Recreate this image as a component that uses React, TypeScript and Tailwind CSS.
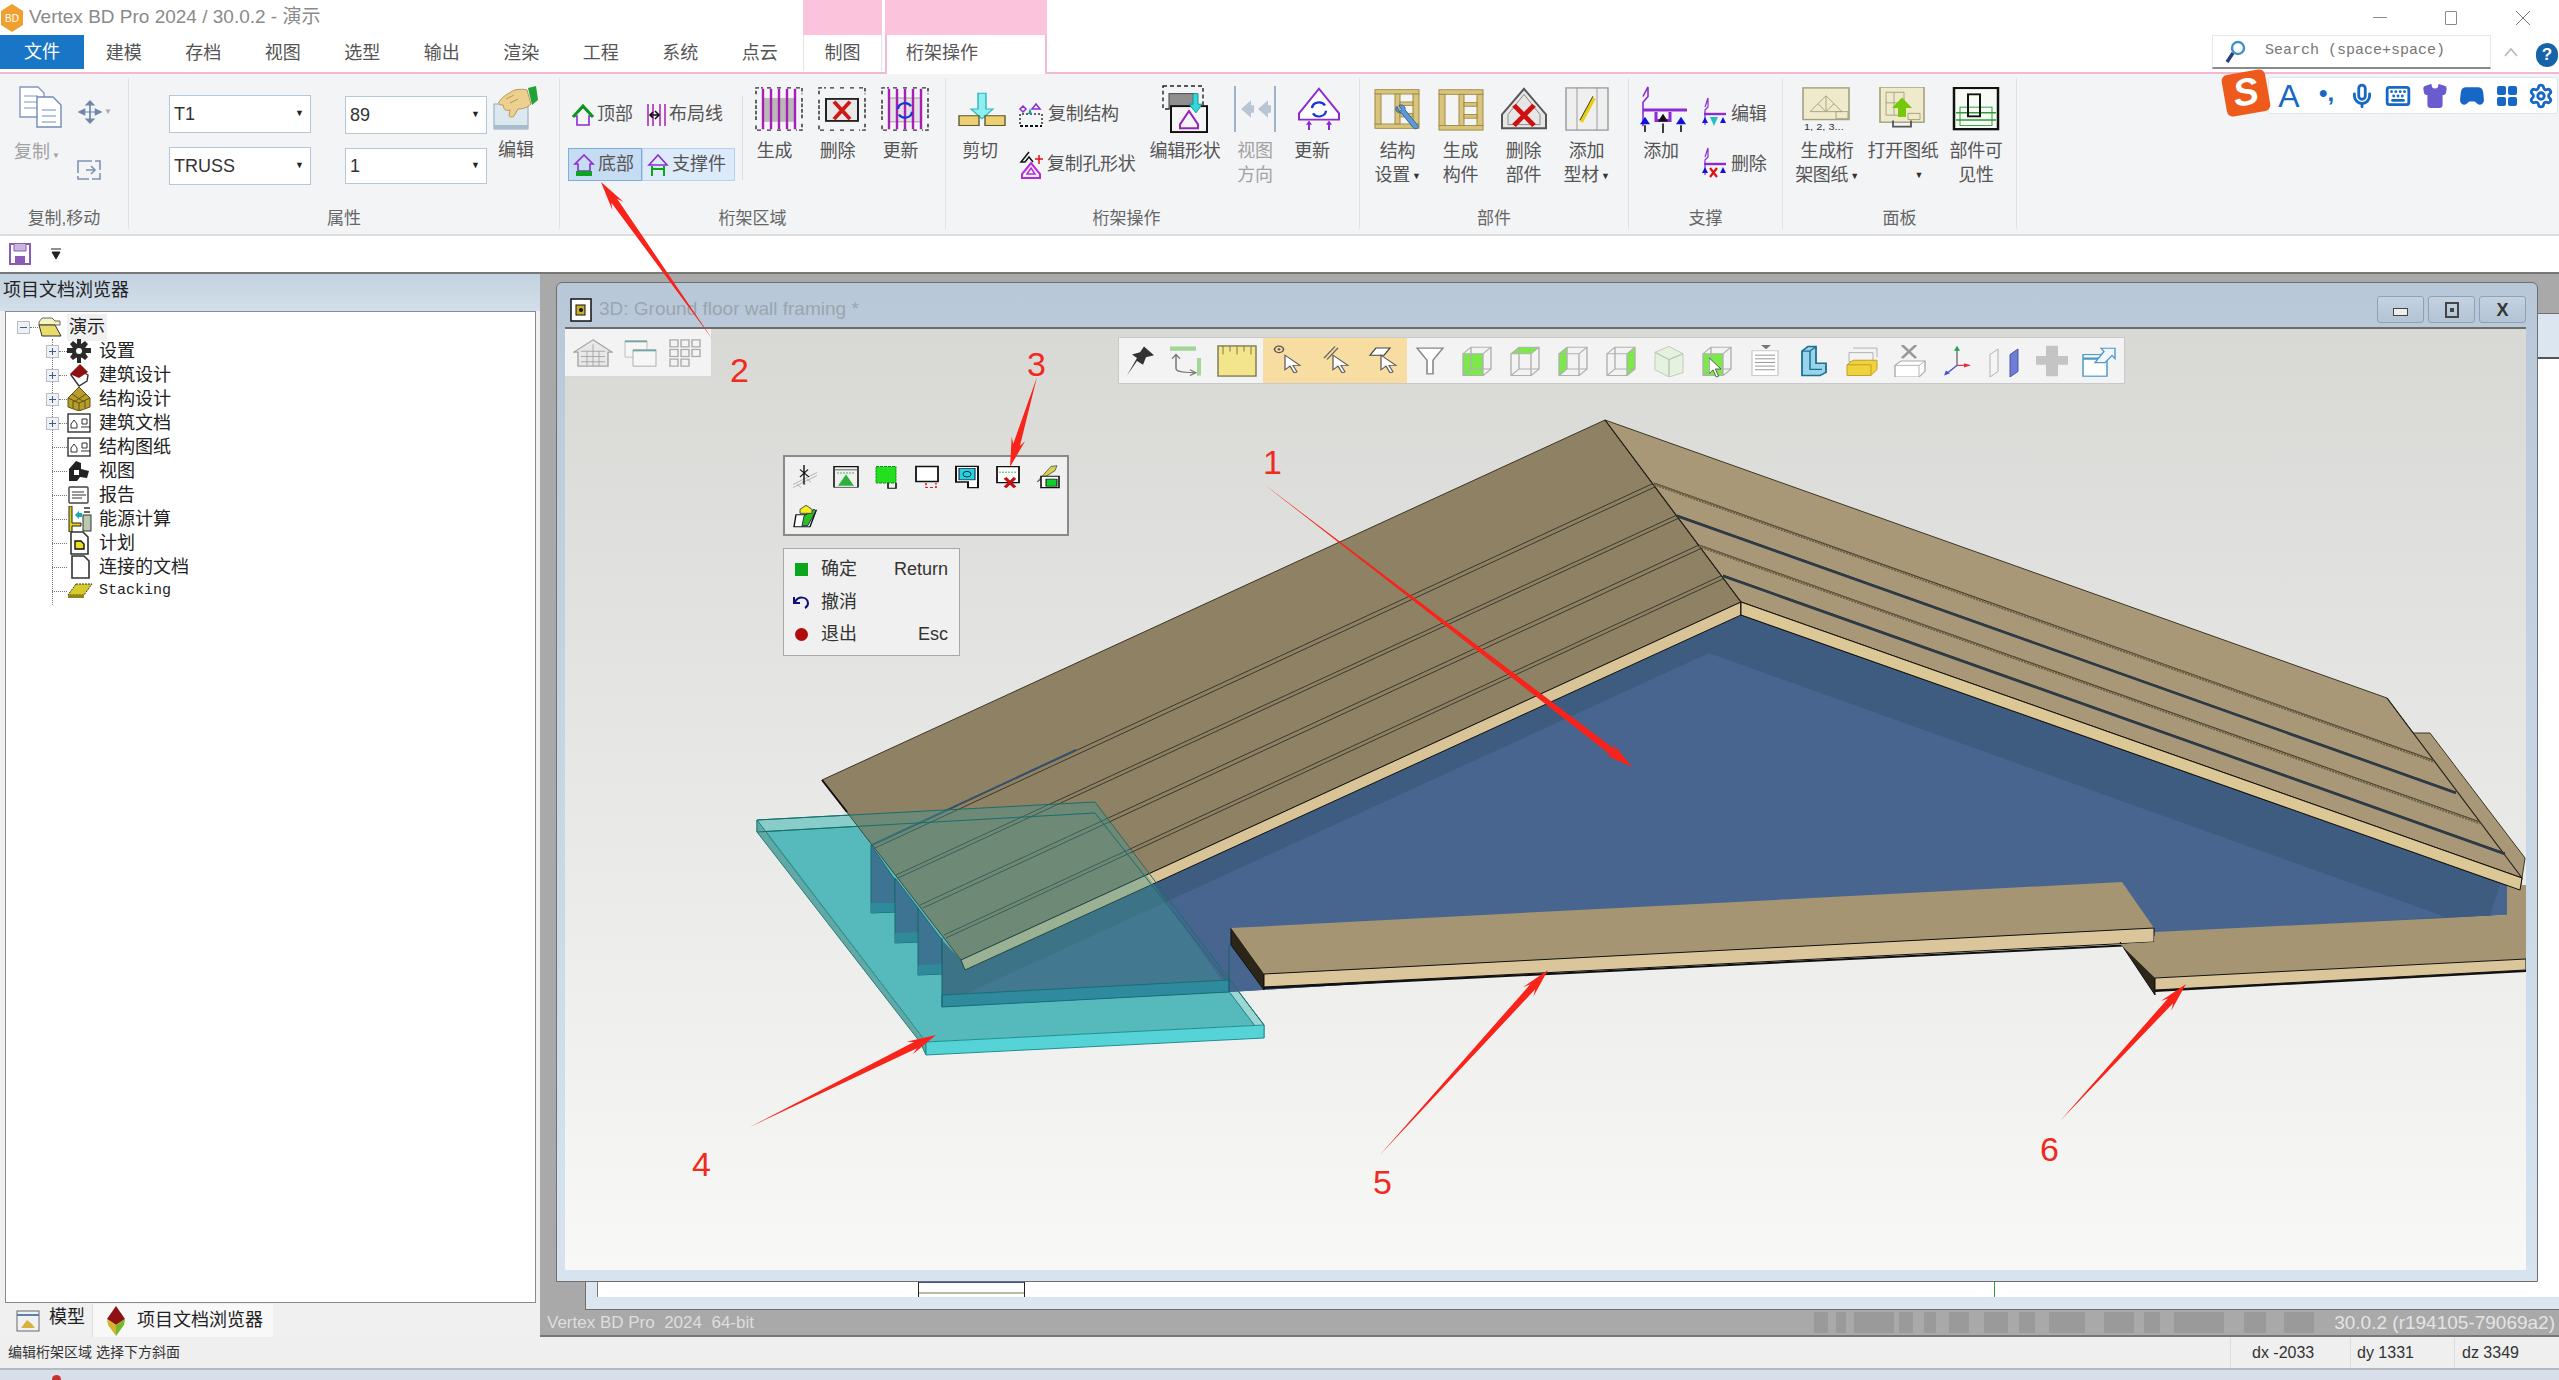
import React from "react";
import { Gamepad2, Keyboard, LayoutGrid, Mic, Settings, Shirt } from "lucide-react";

const CJK = "font-['Liberation_Sans','Noto_Sans_CJK_SC',sans-serif]";

// ---------- ribbon icons (48 box) ----------
const I = ({ children, w = 48, h = 48, className }: { children: React.ReactNode; w?: number; h?: number; className?: string }) => (
  <svg width={w} height={h} viewBox={`0 0 ${w} ${h}`} preserveAspectRatio="none" fill="none" className={className}>
    {children}
  </svg>
);

const TrussBox = ({ children }: { children?: React.ReactNode }) => (
  <I>
    <path d="M1 8V1h7M12 1h6M22 1h6M32 1h6M41 1h6v7M47 12v24M47 40v7h-6M36 47h-6M26 47h-6M16 47h-6M6 47H1v-7M1 36V12" stroke="#333" strokeWidth="1.5" strokeDasharray="4 2" />
    {children}
  </I>
);
const Purple = () => (
  <g stroke="#a81fb3" strokeWidth="2.4">
    <path d="M8 2v44M16 2v44M24 2v44M32 2v44M40 2v44" />
  </g>
);
const Frame = () => (
  <g stroke="#a08a45" fill="#d8c47c" strokeWidth="1">
    <rect x="2" y="3" width="44" height="5" />
    <rect x="2" y="42" width="44" height="5" />
    <rect x="2" y="8" width="6" height="34" />
    <rect x="40" y="8" width="6" height="34" />
    <rect x="22" y="8" width="5" height="34" />
    <rect x="27" y="17" width="13" height="4" />
    <rect x="27" y="30" width="13" height="4" />
  </g>
);

const icons: Record<string, React.ReactNode> = {
  gen: <TrussBox><rect x="8" y="12" width="32" height="26" fill="#b9b9b9" /><Purple /></TrussBox>,
  del: (
    <TrussBox>
      <rect x="8" y="13" width="32" height="24" fill="#e8e8e8" stroke="#222" strokeWidth="2" />
      <path d="M16 16l16 19M32 16L16 35" stroke="#d01818" strokeWidth="4" />
    </TrussBox>
  ),
  upd: (
    <TrussBox>
      <rect x="8" y="12" width="32" height="26" fill="#e2e2e2" stroke="#999" />
      <Purple />
      <path d="M17 24a7 7 0 0 1 13-3M31 27a7 7 0 0 1-13 3" stroke="#1438d8" strokeWidth="2.4" />
    </TrussBox>
  ),
  cut: (
    <I>
      <path d="M20 3h8v21h7L24 37 13 24h7z" fill="#8deeee" stroke="#2bb5c0" strokeWidth="1.4" />
      <rect x="1" y="33" width="20" height="13" fill="#eecf72" stroke="#5b5b35" strokeWidth="1.4" />
      <rect x="27" y="33" width="20" height="13" fill="#eecf72" stroke="#5b5b35" strokeWidth="1.4" />
    </I>
  ),
  editShape: (
    <I w={48} h={50}>
      <path d="M2 1h40v24H2z" stroke="#222" strokeWidth="1.4" strokeDasharray="4 3" />
      <rect x="8" y="9" width="26" height="16" fill="#8f8f8f" stroke="#444" />
      <rect x="10" y="22" width="36" height="27" fill="#f5f5f5" stroke="#111" strokeWidth="2" />
      <path d="M28 27l9 14v4H19v-4z" stroke="#9a22bb" strokeWidth="2" />
      <path d="M32 9h5v11h4l-6 9-7-9h4z" fill="#33d8d8" stroke="#1a8f9a" />
    </I>
  ),
  view: (
    <I w={48} h={50}>
      <path d="M4 1v48M44 1v48" stroke="#9eb2cb" strokeWidth="2" />
      <path d="M10 25l10-9v5h3v8h-3v5zM27 25l10-9v5h3v8h-3v5z" fill="#b9c5d4" />
    </I>
  ),
  update: (
    <I w={48} h={50}>
      <path d="M24 2L44 30v7H4v-7z" stroke="#8d2bd2" strokeWidth="2" fill="#fff" />
      <path d="M17 24a7 7 0 0 1 13-3M31 27a7 7 0 0 1-13 3" stroke="#1438d8" strokeWidth="2.4" />
      <path d="M14 40v9M34 40v9" stroke="#8d2bd2" strokeWidth="2" />
      <path d="M14 38l-3 5h6zM34 38l-3 5h6z" fill="#8d2bd2" />
    </I>
  ),
  struct: (
    <I w={50} h={50}>
      <Frame />
      <path d="M24 22c-3 4 0 8 4 7l12 17c2 3 6 1 5-2L32 26c1-4-3-7-6-5l3 5-3 2z" fill="#5f9ad8" stroke="#2a5f9a" />
    </I>
  ),
  genPart: <I><Frame /></I>,
  delPart: (
    <I>
      <path d="M24 2L46 30v15H2V30z" fill="#e6e6e6" stroke="#555" strokeWidth="2" />
      <path d="M24 8L40 30v11H8V30z" stroke="#888" />
      <path d="M14 20l20 22M34 20L14 42" stroke="#d01010" strokeWidth="5" />
    </I>
  ),
  profile: (
    <I>
      <rect x="3" y="1" width="42" height="46" fill="#efefef" stroke="#999" strokeWidth="1.4" />
      <path d="M14 1v46M34 1v46" stroke="#999" />
      <path d="M18 38L31 12" stroke="#e8d010" strokeWidth="4" />
      <path d="M17 36l13-26" stroke="#333" strokeWidth="1" />
    </I>
  ),
  add: (
    <I w={50} h={50}>
      <path d="M5 12L10 2v10L5 18v25" stroke="#8d2bd2" strokeWidth="1.6" />
      <path d="M5 26h44M18 28v9h14v-9" stroke="#8d2bd2" strokeWidth="3" />
      <path d="M7 42v7M25 40v10M43 42v7" stroke="#111" strokeWidth="1.6" />
      <path d="M7 33l-5 8h10zM43 33l-5 8h10z" fill="#1010e0" />
      <path d="M25 30l-5 8h10z" fill="#111" />
    </I>
  ),
  genDraw: (
    <I w={50} h={50}>
      <rect x="1" y="1" width="46" height="36" fill="#eeeacb" stroke="#a3a27c" strokeWidth="1.6" />
      <path d="M8 28L24 10l16 18zM24 10v18M16 19l8 9 8-9" stroke="#a3a27c" />
      <rect x="34" y="28" width="12" height="8" stroke="#a3a27c" />
      <text x="2" y="49" fontSize="11" fill="#333" fontFamily="Liberation Sans">1, 2, 3...</text>
    </I>
  ),
  openDraw: (
    <I w={50} h={50}>
      <rect x="2" y="0" width="44" height="40" fill="#eeeacb" stroke="#a3a27c" strokeWidth="1.6" />
      <path d="M8 6h18v26H8zM8 18h18M16 6v26M30 30h12v7H30z" stroke="#a3a27c" />
      <path d="M20 20h8v14h-8z" fill="#76c80a" />
      <path d="M24 12l-10 12h20z" fill="#76c80a" />
      <path d="M15 38v7h18v-7" stroke="#555" strokeWidth="1.8" />
    </I>
  ),
  vis: (
    <I>
      <rect x="2" y="1" width="44" height="45" fill="#f6fbf4" stroke="#111" strokeWidth="2.5" />
      <path d="M4 28h40M4 36h40" stroke="#2e9a3c" strokeWidth="1.6" />
      <rect x="8" y="22" width="32" height="20" stroke="#2e9a3c" />
      <rect x="16" y="8" width="12" height="24" stroke="#111" strokeWidth="2" />
    </I>
  ),
};

const HouseTop = () => (
  <I w={24} h={22}>
    <path d="M12 3L3 12h3v9h12v-9h3z" stroke="#8d2bd2" strokeWidth="1.6" />
    <path d="M2 13L12 2l10 11" stroke="#0a9a1a" strokeWidth="3" />
  </I>
);
const HouseBottom = () => (
  <I w={24} h={22}>
    <path d="M12 1L3 10h3v7h12v-7h3z" stroke="#8d2bd2" strokeWidth="1.6" />
    <rect x="4" y="17" width="16" height="5" fill="#0ca61e" />
  </I>
);
const HouseSupport = () => (
  <I w={24} h={22}>
    <path d="M12 1L3 11h18z" stroke="#8d2bd2" strokeWidth="1.6" />
    <path d="M6 12v10M18 12v10M5 15h14" stroke="#0ca61e" strokeWidth="2" />
  </I>
);
const LayoutLines = () => (
  <I w={22} h={24}>
    <path d="M3 1v22M8 1v22M15 1v22M20 1v22" stroke="#a81fb3" strokeWidth="1.5" />
    <path d="M5 12h9M10 8l4 4-4 4M8 9l-3 3 3 3" stroke="#111" strokeWidth="1.6" />
  </I>
);
const CopyStruct = () => (
  <I w={26} h={26}>
    <path d="M2 22V12h22v10" stroke="#333" strokeWidth="1.5" strokeDasharray="2 2" />
    <path d="M5 4l3 3-3 3-3-3zM18 2l4 5h-8z" stroke="#8d2bd2" strokeWidth="1.5" />
    <path d="M12 6l-2 6h4z" fill="#1a9ab0" />
    <path d="M2 24h22" stroke="#111" strokeWidth="2" strokeDasharray="3 2" />
  </I>
);
const CopyHole = () => (
  <I w={24} h={28}>
    <path d="M10 1L2 11h4l4-5 4 5" stroke="#111" strokeWidth="1.5" />
    <path d="M12 12l9 11v4H3v-4z" stroke="#b82ad6" strokeWidth="2" />
    <path d="M12 17l4 6H8z" stroke="#b82ad6" strokeWidth="1.5" />
    <path d="M20 4v9M16 8h8" stroke="#e01010" strokeWidth="1.5" />
  </I>
);
const SupportEdit = () => (
  <I w={26} h={34}>
    <path d="M4 10L7 1v9L4 13v15" stroke="#8d2bd2" strokeWidth="1.2" />
    <path d="M3 17h22" stroke="#8d2bd2" strokeWidth="2.4" />
    <path d="M4 20l-3 6h6zM22 20l-3 6h6z" fill="#1010e0" />
    <path d="M9 20h8l-4 9z" fill="#1fc0c0" />
  </I>
);
const SupportDel = () => (
  <I w={26} h={34}>
    <path d="M4 10L7 1v9L4 13v15" stroke="#8d2bd2" strokeWidth="1.2" />
    <path d="M3 17h22" stroke="#8d2bd2" strokeWidth="2.4" />
    <path d="M4 20l-3 6h6zM22 20l-3 6h6z" fill="#1010e0" />
    <path d="M9 21l7 9M16 21l-7 9" stroke="#e01010" strokeWidth="2.2" />
  </I>
);

const Caret = () => <span className="text-[9px] leading-none ml-0.5 align-middle text-[#333]">▼</span>;

// ---------- ribbon layout ----------
const Group = ({ className, label, labelClass, children }: { className: string; label: string; labelClass?: string; children: React.ReactNode }) => (
  <div className={`flex flex-col border-r border-[#e0e2e5] shrink-0 ${className}`}>
    <div className="flex flex-1 min-h-0">{children}</div>
    <div className={`h-[22px] leading-[24px] text-center text-[17px] text-[#666] ${labelClass ?? ""}`}>{label}</div>
  </div>
);

const Big = ({ id, lines, className, gray, caret, iconClass, textClass }: { id: string; lines: string[]; className: string; gray?: boolean; caret?: boolean; iconClass?: string; textClass?: string }) => (
  <div className={`flex flex-col items-center pt-[6px] shrink-0 ${className}`}>
    <div className={`h-[50px] flex items-center justify-center ${iconClass ?? "[&_svg]:h-[44px]"}`}>{icons[id]}</div>
    <div className={`mt-[5px] text-[18px] leading-[24px] text-center whitespace-nowrap tracking-[-0.3px] ${gray ? "text-[#a2a2a2]" : "text-[#555]"} ${textClass ?? ""}`}>
      {lines.map((l, i) => (
        <div key={i}>
          {l}
          {caret && i === lines.length - 1 ? <Caret /> : null}
        </div>
      ))}
    </div>
  </div>
);

const Small = ({ icon, text, className }: { icon: React.ReactNode; text: string; className?: string }) => (
  <div className={`flex items-center gap-[4px] text-[18px] text-[#555] whitespace-nowrap tracking-[-0.3px] ${className ?? ""}`}>
    {icon}
    <span>{text}</span>
  </div>
);

const Combo = ({ value, className }: { value: string; className: string }) => (
  <div className={`flex items-center justify-between border border-[#b4c6da] bg-white pl-[4px] pr-[6px] text-[18px] text-[#333] ${className}`}>
    <span>{value}</span>
    <span className="text-[9px] text-[#222]">▼</span>
  </div>
);

const Ribbon = () => (
  <div className="h-[162px] bg-[#f3f4f6] border-b-2 border-[#dcdcdc] pt-[4px] pb-[5px] flex">
    <Group className="w-[129px]" label="复制,移动">
      <div className="w-full">
        <div className="flex pl-[18px] pt-[8px] gap-[12px] items-center">
          <svg width="48" height="42" viewBox="0 0 48 42" fill="none">
            <path d="M2 1h18l6 6v24H2z" fill="#fff" stroke="#8297c0" strokeWidth="1.4" />
            <path d="M6 10h14M6 16h14M6 22h14" stroke="#8297c0" />
            <path d="M19 11h16l8 8v22H19z" fill="#fff" stroke="#7189b8" strokeWidth="1.4" />
            <path d="M24 24h14M24 30h14M24 36h14" stroke="#7189b8" />
          </svg>
          <div className="flex items-center mt-[9px]">
            <svg width="24" height="26" viewBox="0 0 26 40" preserveAspectRatio="none" fill="none">
              <path d="M13 6v28M3 20h20M13 3l-4 6h8zM13 37l-4-6h8zM1 20l6-4v8zM25 20l-6-4v8z" fill="#6f86a8" stroke="#6f86a8" strokeWidth="1.8" />
            </svg>
            <span className="text-[8px] text-[#aaa] ml-[2px]">▼</span>
          </div>
        </div>
        <div className="flex items-center pl-[14px] mt-[11px] text-[18px] text-[#a2a2a2] gap-[28px]">
          <span>复制<span className="text-[8px] ml-[2px]">▼</span></span>
        </div>
        <div className="flex pl-[77px] mt-[-8px]">
          <svg width="24" height="24" viewBox="0 0 24 24" fill="none">
            <path d="M1 3h22v18H1z" stroke="#7f93b3" strokeWidth="1.6" strokeDasharray="14 3" />
            <path d="M9 12h9M14 8l4 4-4 4" stroke="#7f93b3" strokeWidth="1.6" />
          </svg>
        </div>
      </div>
    </Group>

    <Group className="w-[431px]" label="属性">
      <div className="flex pl-[40px] pt-[17px]">
        <div className="flex flex-col gap-[14px]">
          <Combo value="T1" className="w-[142px] h-[38px]" />
          <Combo value="TRUSS" className="w-[142px] h-[38px]" />
        </div>
        <div className="flex flex-col gap-[14px] ml-[34px] pt-[1px]">
          <Combo value="89" className="w-[142px] h-[38px]" />
          <Combo value="1" className="w-[142px] h-[36px]" />
        </div>
        <div className="flex flex-col items-center ml-[6px] -mt-[9px] w-[46px]">
          <svg width="46" height="44" viewBox="0 0 46 44" fill="none">
            <rect x="1" y="18" width="34" height="25" fill="#dce8f0" stroke="#8ea4b8" />
            <rect x="1" y="39" width="34" height="4" fill="#a9bccb" />
            <path d="M6 16c2-4 9-9 16-12 4-1 9-1 12 0l4 14c-4 4-9 5-13 5l-4 7c-2 2-5 1-5-1l1-5c-3 1-6 0-6-2l-1-3c-3 0-5-1-4-3z" fill="#ecd08f" stroke="#bd9650" />
            <path d="M35 2l8-2 2 14-6 5z" fill="#1fa336" />
            <path d="M13 13l8-4M17 17l8-4" stroke="#bd9650" />
          </svg>
          <span className="mt-[8px] text-[18px] text-[#555] leading-[24px]">编辑</span>
        </div>
      </div>
    </Group>

    <Group className="w-[386px]" label="桁架区域">
      <div className="pl-[8px] pt-[20px] w-[182px] shrink-0">
        <div className="grid grid-cols-[74px_93px] grid-rows-[33px_33px] gap-y-[17px] text-[18px] text-[#555]">
          <div className="flex items-center gap-[2px] pl-[3px]"><HouseTop /><span>顶部</span></div>
          <div className="flex items-center gap-[2px] pl-[3px]"><LayoutLines /><span>布局线</span></div>
          <div className="flex items-center gap-[2px] pl-[3px] bg-[#c5dcf3] border border-[#7eaedd]"><HouseBottom /><span>底部</span></div>
          <div className="flex items-center gap-[2px] pl-[3px] bg-[#dceafa] border border-[#b5d1ee]"><HouseSupport /><span>支撑件</span></div>
        </div>
      </div>
      <div className="w-px h-[84px] mt-[18px] bg-[#dcdee1] shrink-0" />
      <div className="flex pl-[4px]">
        <Big id="gen" lines={["生成"]} className="w-[63px]" textClass="pr-[8px]" />
        <Big id="del" lines={["删除"]} className="w-[63px]" textClass="pr-[8px]" />
        <Big id="upd" lines={["更新"]} className="w-[63px]" textClass="pr-[8px]" />
      </div>
    </Group>

    <Group className="w-[414px]" label="桁架操作" labelClass="pr-[52px]">
      <Big id="cut" lines={["剪切"]} className="w-[72px]" iconClass="[&_svg]:h-[36px]" textClass="pr-[4px]" />
      <div className="w-[131px] shrink-0 pt-[20px] flex flex-col gap-[17px]">
        <Small icon={<CopyStruct />} text="复制结构" className="h-[33px]" />
        <Small icon={<CopyHole />} text="复制孔形状" className="h-[33px] pl-[1px]" />
      </div>
      <Big id="editShape" lines={["编辑形状"]} className="w-[72px]" iconClass="[&_svg]:h-[48px]" />
      <Big id="view" lines={["视图", "方向"]} className="w-[68px]" gray iconClass="[&_svg]:h-[48px]" />
      <Big id="update" lines={["更新"]} className="w-[60px]" textClass="pr-[14px]" />
    </Group>

    <Group className="w-[269px]" label="部件">
      <div className="flex pl-[6px]">
        <Big id="struct" lines={["结构", "设置"]} caret className="w-[63px]" />
        <Big id="genPart" lines={["生成", "构件"]} className="w-[63px]" />
        <Big id="delPart" lines={["删除", "部件"]} className="w-[63px]" />
        <Big id="profile" lines={["添加", "型材"]} caret className="w-[63px]" />
      </div>
    </Group>

    <Group className="w-[154px]" label="支撑">
      <Big id="add" lines={["添加"]} className="w-[68px]" iconClass="[&_svg]:h-[48px]" textClass="pr-[4px]" />
      <div className="pt-[18px] flex flex-col gap-[14px] pl-[4px]">
        <Small icon={<SupportEdit />} text="编辑" className="h-[36px]" />
        <Small icon={<SupportDel />} text="删除" className="h-[36px]" />
      </div>
    </Group>

    <Group className="w-[234px]" label="面板">
      <div className="flex pl-[6px]">
        <Big id="genDraw" lines={["生成桁", "架图纸"]} caret className="w-[76px]" />
        <div className="w-[76px] shrink-0 flex flex-col items-center">
          <Big id="openDraw" lines={["打开图纸"]} className="w-[76px]" />
          <span className="text-[9px] text-[#333] mt-[6px] ml-[32px]">▼</span>
        </div>
        <Big id="vis" lines={["部件可", "见性"]} className="w-[70px]" />
      </div>
    </Group>
  </div>
);

// ---------- tree ----------
const TreeIcon = ({ kind }: { kind: string }) => {
  if (kind === "gear")
    return (
      <I w={24} h={24}>
        <path d="M10 0h4v5l4-3 3 3-3 4h6v5h-6l3 4-3 3-4-3v6h-4v-6l-4 3-3-3 3-4H0V9h6L3 5l3-3 4 3z" fill="#2a2a2a" />
        <circle cx="12" cy="12" r="7" fill="#2a2a2a" />
        <circle cx="12" cy="12" r="3" fill="#fff" />
      </I>
    );
  if (kind === "arch")
    return (
      <I w={24} h={24}>
        <path d="M4 12l8 11 8-5 1-6-9-5z" fill="#fff" stroke="#333" strokeWidth="1.4" />
        <path d="M3 11L13 1l8 8-9 6z" fill="#8f1010" />
      </I>
    );
  if (kind === "struct")
    return (
      <I w={24} h={24}>
        <path d="M12 0L23 11v9l-11 4L1 20v-9z" fill="#b69c2a" stroke="#5f5412" />
        <path d="M1 11l11 5 11-5M12 16v8M6 14v7M18 14v7M5 7l12 8M19 7L7 15" stroke="#5f5412" />
      </I>
    );
  if (kind === "adoc" || kind === "sdoc")
    return (
      <I w={24} h={20}>
        <rect x="1" y="1" width="22" height="18" fill="#fff" stroke="#333" strokeWidth="1.4" />
        <path d="M4 11l3-4 3 4v4H4zM15 6h5v5h-5z" stroke="#333" />
        <path d="M14 14h9" stroke="#333" />
      </I>
    );
  if (kind === "view")
    return (
      <I w={24} h={24}>
        <path d="M2 10l7-8 5 2v6l8 2-2 7-7-1-3 4H2z" fill="#222" />
        <path d="M7 11h5v5H7z" fill="#fff" />
      </I>
    );
  if (kind === "report")
    return (
      <I w={24} h={20}>
        <rect x="2" y="2" width="19" height="16" rx="1" fill="#fff" stroke="#444" strokeWidth="1.4" />
        <path d="M5 7h12M5 10h14M5 13h10" stroke="#333" />
      </I>
    );
  if (kind === "energy")
    return (
      <I w={26} h={26}>
        <path d="M2 0h3v17h9v3H5v6H2z" fill="#e0d015" stroke="#222" />
        <path d="M8 9l4-4v2h3v4h-3v2z" fill="#1fa5b8" />
        <rect x="16" y="9" width="8" height="16" fill="#b9c8ae" stroke="#333" />
        <path d="M17 2h6M17 6h6" stroke="#333" strokeWidth="1.5" />
      </I>
    );
  if (kind === "plan")
    return (
      <I w={24} h={24}>
        <path d="M4 1h12l5 5v17H4z" fill="#fff" stroke="#333" strokeWidth="1.6" />
        <path d="M8 10h6l3 3v5H8z" fill="#e9dc22" stroke="#111" strokeWidth="1.4" />
      </I>
    );
  if (kind === "link")
    return (
      <I w={24} h={24}>
        <path d="M5 1h12l5 5v17H5z" fill="#fff" stroke="#333" strokeWidth="1.6" />
      </I>
    );
  return (
    <I w={26} h={16}>
      <path d="M9 1h16l-8 11H1z" fill="#d6cb2a" stroke="#333" strokeDasharray="2 1" />
      <path d="M1 12h16v3H1z" fill="#8e8615" />
    </I>
  );
};

const tree = [
  { kind: "gear", text: "设置", plus: true },
  { kind: "arch", text: "建筑设计", plus: true },
  { kind: "struct", text: "结构设计", plus: true },
  { kind: "adoc", text: "建筑文档", plus: true },
  { kind: "sdoc", text: "结构图纸" },
  { kind: "view", text: "视图" },
  { kind: "report", text: "报告" },
  { kind: "energy", text: "能源计算" },
  { kind: "plan", text: "计划" },
  { kind: "link", text: "连接的文档" },
];

const Box = ({ sign }: { sign: "+" | "-" }) => (
  <span className="w-[13px] h-[13px] shrink-0 border border-[#b8bcc4] bg-[#eef0f4] flex items-center justify-center relative">
    <span className="w-[7px] h-px bg-[#3e5a98]" />
    {sign === "+" && <span className="absolute w-px h-[7px] bg-[#3e5a98]" />}
  </span>
);

const LeftPanel = () => (
  <div className="w-[540px] shrink-0 flex flex-col bg-[#f0f0f0]">
    <div className="h-[37px] bg-linear-to-b from-[#c3d2e0] to-[#d2dfea] text-[18px] text-[#222] leading-[32px] pl-[3px]">项目文档浏览器</div>
    <div className="flex-1 mx-[5px] mr-[4px] border border-[#8a8a8a] bg-white relative pt-[3px] text-[18px] text-[#222]">
      <div className="absolute left-[46px] top-[27px] h-[266px] border-l border-dotted border-[#777]" />
      <div className="flex items-center h-[24px] pl-[11px]">
        <Box sign="-" />
        <span className="w-[8px] border-t border-dotted border-[#777]" />
        <svg width="24" height="20" viewBox="0 0 24 20" fill="none">
          <path d="M1 5l3-4h10l3 3h5v4H1z" fill="#f8f3c0" stroke="#666" />
          <path d="M1 8h16l6 11H4z" fill="#e8dc6a" stroke="#333" />
        </svg>
        <span className="ml-[5px] bg-[#f0f0f0] px-[2px]">演示</span>
      </div>
      {tree.map((t) => (
        <div key={t.text} className="flex items-center h-[24px] pl-[40px]">
          {t.plus ? <Box sign="+" /> : <span className="w-[6px] shrink-0" />}
          <span className={`${t.plus ? "w-[8px]" : "w-[15px]"} shrink-0 border-t border-dotted border-[#777]`} />
          <span className="w-[32px] shrink-0 flex items-center"><TreeIcon kind={t.kind} /></span>
          <span>{t.text}</span>
        </div>
      ))}
      <div className="flex items-center h-[24px] pl-[46px]">
        <span className="w-[15px] shrink-0 border-t border-dotted border-[#777]" />
        <span className="w-[32px] shrink-0 flex items-center"><TreeIcon kind="stack" /></span>
        <span className="font-['Liberation_Mono',monospace] text-[15px]">Stacking</span>
      </div>
    </div>
    <div className="h-[33px] flex pl-[8px] text-[18px] text-[#222] mt-[1px]">
      <div className="w-[85px] flex items-center pl-[8px] gap-[9px] border-r border-[#dedede]">
        <svg width="24" height="22" viewBox="0 0 24 22" fill="none">
          <rect x="1" y="1" width="22" height="20" fill="#eef2f7" stroke="#666" />
          <path d="M1 5h22" stroke="#5e7fa8" strokeWidth="2" />
          <path d="M5 18l6-8 5 4 3 4z" fill="#d9b23c" />
        </svg>
        <span className="-mt-[6px]">模型</span>
      </div>
      <div className="w-[180px] bg-[#f8f8f8] flex items-center pl-[12px] gap-[10px]">
        <svg width="22" height="32" viewBox="0 0 22 32" fill="none">
          <path d="M11 1l9 13-9 6-9-6z" fill="#8e1212" />
          <path d="M2 14l9 6v11L3 20z" fill="#d2b52f" />
          <path d="M20 14l-9 6v11l8-11z" fill="#76b82a" />
        </svg>
        <span>项目文档浏览器</span>
      </div>
    </div>
  </div>
);

// ---------- 3d scene ----------
const roofLeft = "1605,420 1741,602 961,960 822,780";
const fasciaLeft = "1741,602 961,960 965,970 1741,615";
const floorDark = "1741,615 2520,890 2507,890 2507,915 1229,992 942,1007 942,940 961,960";

const Scene = () => (
  <svg className="absolute inset-0" width="1961" height="941" viewBox="565 329 1961 941" fill="none">
    <defs>
      <clipPath id="over">
        <polygon points={roofLeft} />
        <polygon points={fasciaLeft} />
        <polygon points={floorDark} />
      </clipPath>
    </defs>
    {/* teal slab */}
    <polygon points="757,832 1095,813 1264,1025 926,1042" fill="#56b9bb" />
    <polygon points="757,820 1095,802 1095,813 757,832" fill="#88cdca" stroke="#1f7f7c" />
    <polygon points="757,820 757,832 920,1042 926,1055 926,1042" fill="#62a9a5" stroke="#1f7f7c" />
    <polygon points="1095,802 1264,1025 1264,1038 1095,813" fill="#9ed6d4" stroke="#1f7f7c" />
    <polygon points="926,1042 1264,1025 1264,1038 926,1055" fill="#56d3d7" stroke="#1f8f90" />
    <path d="M770,838L926,1042" stroke="#3d9a98" />

    {/* stair walls */}
    <polygon points="871,845 895,880 895,912 871,913" fill="#3c7491" stroke="#176a70" />
    <polygon points="871,903 895,903 895,912 871,913" fill="#2f8a9c" />
    <polygon points="895,878 918,908 918,942 895,943" fill="#3c7491" stroke="#176a70" />
    <polygon points="895,933 918,932 918,942 895,943" fill="#2f8a9c" />
    <polygon points="918,908 942,940 942,974 918,975" fill="#3c7491" stroke="#176a70" />
    <polygon points="918,965 942,964 942,974 918,975" fill="#2f8a9c" />

    {/* floor */}
    <polygon points={floorDark} fill="#3d5c7f" />
    <polygon points="1709,653 2446,917 1229,992 965,994" fill="#47658f" />
    <polygon points="2490,915 2500,885 2507,880 2507,915" fill="#47658f" />

    {/* left roof */}
    <polygon points={roofLeft} fill="#8f8163" stroke="#3c3626" />
    <polygon points={fasciaLeft} fill="#d9c497" stroke="#111" />
    <g stroke="#3b3a2e" strokeWidth="1">
      <path d="M1654,483L872,845M1657,486L875,848" />
      <path d="M1677,515L896,875M1679,518L898,878" />
      <path d="M1699,545L920,905M1702,548L923,908" />
      <path d="M1723,575L944,935M1725,578L946,938" />
    </g>
    <path d="M1076,750L872,845" stroke="#35506b" strokeWidth="2" />
    <path d="M822,780L847,812" stroke="#111" strokeWidth="2" />

    {/* right roof */}
    <polygon points="1605,420 2387,698 2413,733 2430,733 2525,858 2522,878 1741,602" fill="#a99877" stroke="#3c3626" />
    <path d="M2387,698L2522,878M1605,420L1741,602" stroke="#26231a" strokeWidth="1.2" />
    <path d="M1654,483L2433,760M1677,515L2456,792M1699,545L2480,822M1723,575L2505,853" stroke="#2f2c22" strokeWidth="1" />
    <path d="M1654,484L2433,761M1699,546L2480,823" stroke="#6b6045" strokeWidth="3" strokeDasharray="2 1" />
    <path d="M1677,516L2456,793M1723,576L2505,854" stroke="#2d3a47" strokeWidth="2.5" />
    <polygon points="1741,602 2522,878 2520,890 1741,615" fill="#dcc797" stroke="#111" />

    {/* tint where the slab's box overlaps */}
    <polygon points="757,820 1095,802 1229,990 926,1042" fill="rgba(60,150,145,.4)" clipPath="url(#over)" />
    <path d="M757,820L1095,802M757,832L1095,813" stroke="#176f6e" />
    <path d="M1095,813L1229,983M1095,802L1264,1025" stroke="#176f6e" />
    <polygon points="942,995 1229,980 1229,992 942,1007" fill="#2e8a9c" stroke="#176f78" />
    <path d="M942,938V1007M1229,945V992" stroke="#156370" />

    {/* board 5 */}
    <polygon points="1231,928 1264,974 1264,990 1231,945" fill="#2b2618" stroke="#111" />
    <polygon points="1231,928 2122,882 2154,928 1264,974" fill="#a59573" />
    <polygon points="1264,974 2154,928 2154,942 1264,987" fill="#dac69a" stroke="#111" />
    <path d="M1264,988L2154,944" stroke="#111" strokeWidth="2" />

    {/* board 6 */}
    <polygon points="2120,942 2155,978 2155,995 2125,950" fill="#2b2618" stroke="#111" />
    <polygon points="2155,932 2507,915 2507,885 2526,885 2526,959 2155,978 2120,944 2154,942" fill="#a59573" />
    <polygon points="2155,978 2526,959 2526,970 2155,990" fill="#dac69a" stroke="#111" />
    <path d="M2155,991L2526,971" stroke="#111" strokeWidth="2" />
    <polygon points="2522,878 2520,890 1741,615 1741,602" fill="#dcc797" stroke="#111" />
  </svg>
);

// ---------- toolbars over the canvas ----------
const Cube = ({ face }: { face?: "front" | "top" | "left" | "right" | "all" }) => (
  <I w={32} h={44}>
    {face === "front" && <path d="M2 12h20v30H2z" fill="#7de84a" />}
    {face === "top" && <path d="M2 12l8-9h20l-8 9z" fill="#7de84a" />}
    {face === "left" && <path d="M2 12l8-9v30l-8 9z" fill="#7de84a" />}
    {face === "right" && <path d="M22 12l8-9v30l-8 9z" fill="#7de84a" />}
    {face === "all" && <path d="M2 10l14-8 14 10v26l-14 6-14-10z" fill="#e6f2e0" stroke="#b9c6b2" />}
    {face === "all" && <path d="M2 10l14 10 14-8M16 20v24" stroke="#b9c6b2" strokeWidth="1.4" />}
    {face !== "all" && <path d="M2 12h20v30H2zM2 12l8-9h20v30l-8 9M22 12l8-9M2 42l8-9h20M10 3v30" stroke="#aeb2ae" strokeWidth="1.4" />}
  </I>
);

const Pointer = () => (
  <path d="M0 0l0 20 5-5 4 9 3-1-4-9h7z" fill="#fff" stroke="#555" strokeWidth="1.2" />
);

const tools: { x: string; node: React.ReactNode }[] = [
  { x: "w-[40px]", node: <I w={32} h={44}><path d="M20 2l10 12-8 3-3 10-6-5L3 42l10-24-5-5 8-3z" fill="#333" /></I> },
  { x: "w-[50px]", node: <I w={34} h={44}><rect x="2" y="2" width="26" height="6" fill="#a5d59a" /><rect x="29" y="18" width="4" height="24" fill="#a5d59a" /><path d="M8 14v18c0 4 4 6 18 6M4 19l4-6 4 6M22 34l6 4-6 4" stroke="#777" strokeWidth="1.5" /></I> },
  { x: "w-[53px]", node: <I w={40} h={34}><rect x="1" y="1" width="38" height="32" fill="#f2e58c" stroke="#7a7650" strokeWidth="1.4" /><path d="M6 1v9M13 1v6M20 1v9M27 1v6M34 1v9" stroke="#7a7650" /></I> },
];

const cursorTools = [
  <g key="a"><circle cx="7" cy="6" r="4.5" stroke="#555" strokeWidth="1.6" /><circle cx="7" cy="6" r="1.6" fill="#555" /></g>,
  <path key="b" d="M4 18L15 2M7 20L18 4" stroke="#666" strokeWidth="1.4" />,
  <path key="c" d="M2 14l6-10h14l-6 10z" fill="#fff" stroke="#444" strokeWidth="1.4" />,
];

const Toolbar = () => (
  <div className="absolute left-[553px] top-[8px] w-[1007px] h-[47px] bg-[#f3f3f3] border border-[#c9c9c9] flex items-center pl-[1px] [&_svg]:h-[32px]">
    {tools.map((t, i) => (
      <div key={i} className={`${t.x} shrink-0 flex justify-center`}>{t.node}</div>
    ))}
    <div className="flex h-full bg-[#f8dda2] shrink-0 w-[144px]">
      {cursorTools.map((c, i) => (
        <div key={i} className="w-[48px] flex justify-center items-center">
          <I w={30} h={44}>
            {c}
            <g transform="translate(13 14)"><Pointer /></g>
          </I>
        </div>
      ))}
    </div>
    <div className="w-[46px] shrink-0 flex justify-center">
      <I w={30} h={42}><path d="M2 4h26L18 20v18h-6V20z" fill="#fff" stroke="#888" strokeWidth="1.6" /></I>
    </div>
    <div className="w-[48px] shrink-0 flex justify-center"><Cube face="front" /></div>
    <div className="w-[48px] shrink-0 flex justify-center"><Cube face="top" /></div>
    <div className="w-[48px] shrink-0 flex justify-center"><Cube face="left" /></div>
    <div className="w-[48px] shrink-0 flex justify-center"><Cube face="right" /></div>
    <div className="w-[48px] shrink-0 flex justify-center"><Cube face="all" /></div>
    <div className="w-[48px] shrink-0 flex justify-center relative">
      <Cube face="front" />
      <span className="absolute left-[16px] top-[8px] [&_svg]:h-[22px]">
        <svg width="16" height="22" viewBox="0 0 20 28"><Pointer /></svg>
      </span>
    </div>
    <div className="w-[48px] shrink-0 flex justify-center">
      <I w={30} h={44}><path d="M11 0h10l-5 6z" fill="#777" /><rect x="2" y="8" width="26" height="34" fill="#fff" stroke="#bbb" /><path d="M5 14h20M5 19h20M5 24h20M5 29h20M5 34h20" stroke="#888" /></I>
    </div>
    <div className="w-[49px] shrink-0 flex justify-center">
      <I w={30} h={42}><path d="M3 8l6-6h8v22h10v12l-6 4H3z" fill="#9ad4ea" stroke="#1f6f92" strokeWidth="1.8" /><path d="M3 8h8v24h12M17 2l-6 6" stroke="#1f6f92" strokeWidth="1.5" /></I>
    </div>
    <div className="w-[48px] shrink-0 flex justify-center">
      <I w={34} h={42}><path d="M4 10h24v12H4z" stroke="#aaa" /><path d="M8 4h24v12" stroke="#aaa" /><path d="M2 26l6-6h24v12l-6 8H2z" fill="#f2d23c" stroke="#b59a20" /><path d="M2 26h24v14" stroke="#b59a20" /></I>
    </div>
    <div className="w-[48px] shrink-0 flex justify-center">
      <I w={34} h={44}><path d="M9 0l14 18M23 0L9 18" stroke="#999" strokeWidth="3" /><path d="M2 28l6-6h24v14l-6 8H2z" fill="#fff" stroke="#aaa" strokeWidth="1.4" /><path d="M2 28h24v16M26 28l6-6" stroke="#aaa" /></I>
    </div>
    <div className="w-[46px] shrink-0 flex justify-center">
      <I w={30} h={44}><path d="M15 28V4" stroke="#222" /><path d="M15 1l-3 7h6z" fill="#1ca44a" /><path d="M15 28h12" stroke="#e03040" strokeWidth="1.6" /><path d="M29 28l-7-3v6z" fill="#e03040" /><path d="M15 28L4 40" stroke="#3a55d8" strokeWidth="1.6" /><path d="M2 42l2-7 4 4z" fill="#3a55d8" /></I>
    </div>
    <div className="w-[48px] shrink-0 flex justify-center">
      <I w={32} h={40}><path d="M2 12l8-7v28l-8 7z" fill="#f5f5f5" stroke="#aaa" /><path d="M22 12l8-7v28l-8 7z" fill="#6f7ed6" stroke="#3d4a9a" /></I>
    </div>
    <div className="w-[48px] shrink-0 flex justify-center">
      <I w={34} h={44}><path d="M11 1h12v14h10v12H23v16H11V27H1V15h10z" fill="#c4c4c4" /></I>
    </div>
    <div className="w-[46px] shrink-0 flex justify-center">
      <I w={34} h={40}><rect x="1" y="12" width="24" height="27" fill="#fff" stroke="#4e9bc8" strokeWidth="1.5" /><path d="M1 17h24" stroke="#4e9bc8" strokeWidth="3" /><path d="M13 22L22 8l-3-4h14v13l-3-4-7 9z" fill="#f0f6fa" stroke="#4e9bc8" strokeWidth="1.4" /></I>
    </div>
  </div>
);

const SmallBar = () => (
  <div className="absolute left-0 top-0 w-[147px] h-[48px] bg-[#f3f3f3] border-r border-b border-[#d8d8d8] flex items-center pl-[8px] gap-[11px] [&_svg]:h-[28px]">
    <I w={40} h={32}>
      <path d="M20 1L1 15h4v16h30V15h4z" fill="#e8e8e8" stroke="#a5a5a5" strokeWidth="1.4" />
      <path d="M8 14h24M8 20h24M8 26h24M14 14v17M26 14v17M20 6v25" stroke="#a5a5a5" />
    </I>
    <I w={34} h={34}>
      <path d="M1 2h22v20H1z" fill="#f6f6f6" stroke="#bbb" />
      <path d="M1 3h22" stroke="#70a8a8" strokeWidth="2" />
      <path d="M9 13h23v20H9z" fill="#f6f6f6" stroke="#aaa" />
      <path d="M9 14h23" stroke="#70a8a8" strokeWidth="2" />
    </I>
    <I w={32} h={32}>
      <g stroke="#aaa" strokeWidth="1.4">
        <rect x="1" y="1" width="8" height="8" /><rect x="12" y="1" width="8" height="8" /><rect x="23" y="1" width="8" height="8" />
        <rect x="1" y="12" width="8" height="8" /><rect x="12" y="12" width="8" height="8" /><rect x="23" y="12" width="8" height="8" />
        <rect x="1" y="23" width="8" height="8" /><rect x="12" y="23" width="8" height="8" />
      </g>
    </I>
  </div>
);

const boxIcons = [
  <I key="1" w={26} h={32}><path d="M1 30L25 14M1 26L25 10M5 26l4 4M10 22l4 4M15 19l4 4" stroke="#aaa" /><path d="M12 0v26M8 6l9 10M16 6L8 16" stroke="#111" strokeWidth="1.4" /></I>,
  <I key="2" w={26} h={30}><path d="M1 28V2h24v26" stroke="#111" strokeWidth="1.6" /><path d="M1 28h24M1 6h24" stroke="#555" /><path d="M13 12l8 14H5z" fill="#2fb03a" /><path d="M4 10h18" stroke="#2fb03a" strokeDasharray="2 1" /></I>,
  <I key="3" w={24} h={32}><path d="M2 2h20v22H2z" fill="#22e020" stroke="#0b7a0b" strokeDasharray="3 1" /><path d="M14 24v7h8v-7" stroke="#111" strokeWidth="1.6" /></I>,
  <I key="4" w={26} h={32}><path d="M2 2h22v20H2z" fill="#fff" stroke="#111" strokeWidth="1.8" /><path d="M12 24v6h10v-6" stroke="#d82020" strokeWidth="1.6" strokeDasharray="3 2" /></I>,
  <I key="5" w={26} h={34}><path d="M2 2h22v30H14v-8H2z" fill="#fff" stroke="#111" strokeWidth="2" /><rect x="5" y="5" width="16" height="16" fill="#24d4d8" stroke="#114" /><circle cx="13" cy="13" r="4" stroke="#114" /></I>,
  <I key="6" w={26} h={30}><path d="M2 2h22v20H2z" fill="#fff" stroke="#111" strokeWidth="1.8" /><path d="M4 9h18" stroke="#2fb03a" strokeDasharray="2 1" /><path d="M10 16l10 12M20 16L10 28" stroke="#c81010" strokeWidth="3.5" /></I>,
  <I key="7" w={26} h={34}><path d="M2 24L16 2l6-1-2 7z" fill="#d8d24a" stroke="#555" /><path d="M6 32V16h18v16z" fill="#fff" stroke="#111" strokeWidth="1.6" /><rect x="11" y="20" width="11" height="10" fill="#10d02c" stroke="#111" /></I>,
];

const FloatBox = () => (
  <div className="absolute left-[218px] top-[126px] w-[286px] h-[81px] bg-[#f0f0f0] border-2 border-[#8a8a8a] grid grid-cols-[repeat(7,40.5px)] grid-rows-[40px_38px] items-center justify-items-center pr-[4px] [&_svg]:h-[24px]">
    {boxIcons.map((b, i) => <div key={i} className="flex">{b}</div>)}
    <div className="flex">
      <I w={26} h={36}>
        <path d="M4 16h14l6-6-6 24H2z" fill="#fff" stroke="#111" strokeWidth="1.4" />
        <path d="M12 18l10-10 2 2-8 22-6 1z" fill="#2fc020" stroke="#116" />
        <path d="M14 2l6 6v6H8V8z" fill="#f6f01a" stroke="#333" />
      </I>
    </div>
  </div>
);

const Menu = () => (
  <div className="absolute left-[218px] top-[219px] w-[177px] h-[108px] bg-[#f0f0f0] border border-[#a8a8a8] flex flex-col py-[4px] text-[18px] text-[#333]">
    <div className="flex-1 flex items-center pl-[11px] pr-[11px]">
      <span className="w-[13px] h-[13px] bg-[#0ca61e] mr-[13px]" />
      <span>确定</span>
      <span className="ml-auto text-[18px]">Return</span>
    </div>
    <div className="flex-1 flex items-center pl-[8px]">
      <svg width="19" height="14" viewBox="0 0 19 14" fill="none" className="mr-[10px]">
        <path d="M2 2v6h6M3 7c3-6 12-6 13 1 0 2-1 4-3 5" stroke="#10107a" strokeWidth="2" />
      </svg>
      <span>撤消</span>
    </div>
    <div className="flex-1 flex items-center pl-[11px] pr-[11px]">
      <span className="w-[13px] h-[13px] rounded-full bg-[#b00c0c] mr-[13px]" />
      <span>退出</span>
      <span className="ml-auto text-[18px]">Esc</span>
    </div>
  </div>
);

// ---------- annotations ----------
const arrowPoints = (x1: number, y1: number, x2: number, y2: number, wide: number) => {
  const len = Math.hypot(x2 - x1, y2 - y1);
  const ux = (x2 - x1) / len;
  const uy = (y2 - y1) / len;
  const nx = -uy;
  const ny = ux;
  const head = wide * 4.2;
  const bx = x2 - ux * head;
  const by = y2 - uy * head;
  const cx = x2 - ux * head * 0.78;
  const cy = y2 - uy * head * 0.78;
  const pt = (x: number, y: number) => `${x.toFixed(1)},${y.toFixed(1)}`;
  return [
    pt(x1, y1),
    pt(cx + (nx * wide) / 2, cy + (ny * wide) / 2),
    pt(bx + nx * wide, by + ny * wide),
    pt(x2, y2),
    pt(bx - nx * wide, by - ny * wide),
    pt(cx - (nx * wide) / 2, cy - (ny * wide) / 2),
  ].join(" ");
};

const arrows = [
  [1265, 485, 1632, 767, 7],
  [713, 340, 601, 182, 7],
  [1037, 377, 1010, 467, 7],
  [750, 1127, 936, 1035, 7],
  [1379, 1156, 1548, 970, 7],
  [2060, 1121, 2186, 984, 7],
];

const labels = [
  { n: "1", c: "left-[1263px] top-[442px]" },
  { n: "2", c: "left-[730px] top-[350px]" },
  { n: "3", c: "left-[1027px] top-[344px]" },
  { n: "4", c: "left-[692px] top-[1144px]" },
  { n: "5", c: "left-[1373px] top-[1162px]" },
  { n: "6", c: "left-[2040px] top-[1129px]" },
];

const WinBtn = ({ children }: { children: React.ReactNode }) => (
  <div className="w-[47px] h-[27px] rounded-[3px] border border-[#8fa1b8] bg-linear-to-b from-[#c4d2e0] to-[#b3c3d5] flex items-center justify-center text-[#333]">
    {children}
  </div>
);

const BandBlocks = () => (
  <svg className="absolute right-[225px] top-0" width="520" height="24" viewBox="0 0 520 24">
    {[[0, 14], [22, 10], [40, 40], [85, 14], [110, 12], [135, 20], [170, 24], [205, 16], [235, 36], [290, 30], [330, 16], [360, 50], [430, 22], [470, 30]].map(([x, w]) => (
      <rect key={x} x={x} y={1} width={w} height={21} fill="#9a9a9a" />
    ))}
  </svg>
);

export default function App() {
  return (
    <div className={`relative w-[2559px] h-[1380px] overflow-hidden flex flex-col bg-white ${CJK}`}>
      {/* title */}
      <div className="h-[35px] flex shrink-0 bg-white">
        <div className="w-[803px] flex items-center">
          <svg width="24" height="28" viewBox="0 0 24 28" className="shrink-0">
            <path d="M12 0l11 7v14l-11 7-11-7V7z" fill="#f0a030" />
            <text x="5" y="18" fontSize="10" fill="#fff" fontFamily="Liberation Sans">BD</text>
          </svg>
          <span className="ml-[5px] text-[19px] text-[#8a8a8a] whitespace-nowrap">Vertex BD Pro 2024 / 30.0.2 - 演示</span>
        </div>
        <div className="w-[79px] bg-[#fcc4dc]" />
        <div className="w-[162px] ml-[3px] bg-[#fcc4dc]" />
        <div className="flex-1 flex justify-end items-center pr-[28px] gap-[58px] text-[#8a8a8a]">
          <span className="w-[14px] h-px bg-[#8a8a8a]" />
          <span className="w-[12px] h-[14px] border border-[#8a8a8a] rounded-[1px]" />
          <svg width="16" height="16" viewBox="0 0 16 16"><path d="M1 1l14 14M15 1L1 15" stroke="#777" /></svg>
        </div>
      </div>

      {/* menu */}
      <div className="h-[39px] flex shrink-0 border-b-2 border-[#f3b9d4] text-[18px] text-[#555] bg-white">
        <div className="w-[84px] h-[34px] bg-[#1976c7] text-white text-center leading-[34px]">文件</div>
        {["建模", "存档", "视图", "选型", "输出", "渲染", "工程", "系统", "点云"].map((m) => (
          <div key={m} className="w-[79.5px] text-center leading-[36px]">{m}</div>
        ))}
        <div className="w-[79px] ml-[3.5px] h-[36px] border-x border-[#e4e4e4] text-center leading-[36px]">制图</div>
        <div className="w-[162px] ml-[3px] h-[39px] border-x-2 border-[#f3b9d4] bg-white text-center leading-[36px] pr-[48px]">桁架操作</div>
        <div className="ml-[1165px] w-[279px] h-[34px] bg-white border border-[#e8e8e8] border-b-2 border-b-[#8a8a8a] flex items-center pl-[11px] gap-[19px]">
          <svg width="22" height="26" viewBox="0 0 22 26" fill="none">
            <circle cx="14" cy="9" r="6" stroke="#3f8fc8" strokeWidth="2.4" />
            <path d="M9 14L3 23" stroke="#24407f" strokeWidth="3.4" />
          </svg>
          <span className="font-['Liberation_Mono',monospace] text-[15px] text-[#777]">Search (space+space)</span>
        </div>
        <svg width="14" height="10" viewBox="0 0 14 10" className="ml-[13px] mt-[12px]" fill="none"><path d="M1 9l6-7 6 7" stroke="#b5b5b5" strokeWidth="1.5" /></svg>
        <div className="ml-[18px] mt-[8px] w-[22px] h-[24px] rounded-full bg-[#1763a8] text-white text-[17px] font-bold text-center leading-[24px]">?</div>
      </div>

      <Ribbon />

      {/* quick access */}
      <div className="h-[38px] shrink-0 bg-white flex items-center pl-[9px] gap-[20px] border-b-2 border-[#777]">
        <svg width="22" height="22" viewBox="0 0 22 22" fill="none">
          <path d="M1 1h20v20H1z" stroke="#8a5cb5" strokeWidth="2" fill="#fff" />
          <path d="M5 1v7h12V1" fill="#c9b4de" stroke="#8a5cb5" />
          <rect x="6" y="13" width="10" height="8" fill="#8a5cb5" />
        </svg>
        <svg width="10" height="12" viewBox="0 0 10 12"><path d="M0 1h10M1 4h8l-4 7z" stroke="#222" fill="#222" /></svg>
      </div>

      {/* body */}
      <div className="flex-1 min-h-0 flex">
        <LeftPanel />
        <div className="flex-1 relative bg-[#a9a9a9] border-b-2 border-[#777] overflow-hidden">
          {/* window behind */}
          <div className="absolute left-[45px] top-[39px] w-[2000px] h-[997px] bg-[#dbe6f1] border border-[#6f6f6f]">
            <div className="absolute left-[11px] top-[43px] right-0 bottom-[12px] bg-white border-t-2 border-[#555] border-l border-l-[#777]">
              <div className="absolute left-[320px] bottom-0 w-[107px] h-[16px] border-x border-[#222]">
                <div className="h-[2px] bg-[#3a55a0]" />
                <div className="h-[2px] mt-[9px] bg-[#b9b9a8]" />
              </div>
              <div className="absolute left-[1396px] bottom-0 w-px h-[16px] bg-[#2aa53a]" />
            </div>
          </div>

          {/* 3d window */}
          <div className="absolute left-[16px] top-[8px] w-[1982px] h-[1000px] rounded-t-[6px] border border-[#6f6f6f] bg-linear-to-b from-[#b8c8d8] to-[#d7e4f0] flex flex-col">
            <div className="h-[44px] shrink-0 flex items-center pl-[13px] pt-[9px] relative">
              <svg width="22" height="24" viewBox="0 0 22 24" className="shrink-0">
                <rect x="1" y="1" width="20" height="22" fill="#fff" stroke="#111" strokeWidth="1.5" />
                <rect x="6" y="7" width="9" height="10" fill="#c8b030" stroke="#111" />
                <circle cx="11" cy="12" r="2" fill="#111" />
              </svg>
              <span className="ml-[7px] text-[19px] text-[#9aa5ae]">3D: Ground floor wall framing *</span>
              <div className="ml-auto flex gap-[4px] pr-[11px]">
                <WinBtn><span className="w-[15px] h-[8px] mt-[4px] border border-[#444] bg-[#eee]" /></WinBtn>
                <WinBtn><span className="w-[14px] h-[16px] border-2 border-[#444] flex items-center justify-center"><span className="w-[4px] h-[4px] bg-[#444]" /></span></WinBtn>
                <WinBtn><span className="text-[18px] font-bold leading-none">X</span></WinBtn>
              </div>
            </div>
            <div className="relative mx-[8px] w-[1961px] h-[943px] border-t-2 border-[#6d6d6d] bg-linear-to-b from-[#d8d9d5] via-[#e8e9e7] to-[#f8f8f7] overflow-hidden">
              <Scene />
              <SmallBar />
              <Toolbar />
              <FloatBox />
              <Menu />
            </div>
          </div>

          {/* bottom band text */}
          <div className="absolute left-[7px] bottom-0 h-[25px] text-[17px] text-[#dedede] leading-[25px]">Vertex BD Pro&nbsp; 2024&nbsp; 64-bit</div>
          <div className="absolute left-0 right-0 bottom-0 h-[24px]"><BandBlocks /></div>
          <div className="absolute right-[4px] bottom-0 h-[25px] text-[19px] text-[#e4e4e4] leading-[25px]">30.0.2 (r194105-79069a2)</div>
        </div>
      </div>

      {/* status */}
      <div className="h-[31px] shrink-0 bg-[#efefef] flex items-center text-[14px] text-[#333] pl-[8px]">
        <span className="flex-1">编辑桁架区域 选择下方斜面</span>
        <div className="w-[120px] h-full border-l border-[#dcdcdc] flex items-center pl-[21px] text-[16px]">dx -2033</div>
        <div className="w-[104px] h-full border-l border-[#dcdcdc] flex items-center pl-[6px] text-[16px]">dy 1331</div>
        <div className="w-[105px] h-full border-l border-[#dcdcdc] flex items-center pl-[7px] text-[16px]">dz 3349</div>
      </div>
      <div className="h-[12px] shrink-0 bg-[#d8dfeb] border-t-2 border-[#b5b9bd] relative">
        <span className="absolute left-[52px] top-[5px] w-[9px] h-[9px] rounded-full bg-[#c83030]" />
      </div>

      {/* sogou ime bar */}
      <div className="absolute left-[2268px] top-[77px] w-[290px] h-[37px] bg-white border border-[#dfe5ef] rounded-[3px] flex items-center text-[#1668c4]">
        <span className="w-[40px] text-center text-[32px] leading-none">A</span>
        <span className="w-[36px] text-center text-[24px] font-bold leading-none -mt-[6px]">•,</span>
        <span className="w-[36px] flex justify-center"><Mic size={26} strokeWidth={2.6} /></span>
        <span className="w-[36px] flex justify-center"><Keyboard size={26} strokeWidth={2.6} /></span>
        <span className="w-[38px] flex justify-center"><Shirt size={26} fill="#6a5bd0" stroke="#6a5bd0" /></span>
        <span className="w-[36px] flex justify-center"><Gamepad2 size={26} fill="#1668c4" strokeWidth={2} /></span>
        <span className="w-[36px] flex justify-center"><LayoutGrid size={24} fill="#1668c4" strokeWidth={2} /></span>
        <span className="w-[32px] flex justify-center"><Settings size={26} strokeWidth={2.6} /></span>
      </div>
      <div className="absolute left-[2224px] top-[72px] w-[44px] h-[42px] rounded-[6px] bg-[#ee5a1c] rotate-[-10deg] text-white text-[38px] font-bold italic text-center leading-[40px] font-['Liberation_Sans',sans-serif]">S</div>

      {/* red annotations */}
      <svg className="absolute inset-0 pointer-events-none" width="2559" height="1380" viewBox="0 0 2559 1380">
        {arrows.map(([a, b, c, d, w], i) => (
          <polygon key={i} points={arrowPoints(a, b, c, d, w)} fill="#f8231a" />
        ))}
      </svg>
      {labels.map((l) => (
        <span key={l.n} className={`absolute ${l.c} text-[34px] leading-[40px] text-[#f02a1e] font-['Liberation_Sans',sans-serif]`}>{l.n}</span>
      ))}
    </div>
  );
}
